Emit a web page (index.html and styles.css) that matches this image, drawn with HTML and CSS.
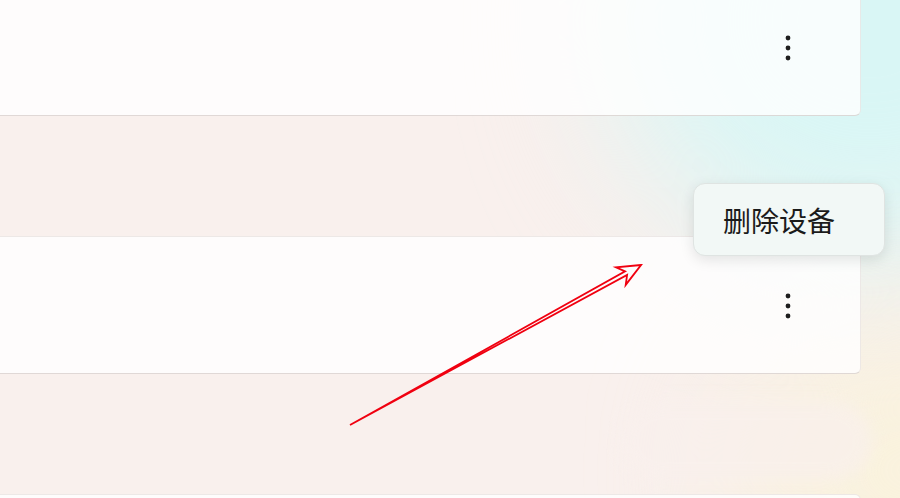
FILE: index.html
```html
<!DOCTYPE html>
<html lang="zh-CN">
<head>
<meta charset="utf-8">
<title>设备</title>
<link rel="stylesheet" href="styles.css">
</head>
<body>
<div class="page">
  <div class="glow glow-cyan"></div>
  <div class="glow glow-yellow"></div>
  <div class="blob"></div>
  <div class="list">
    <div class="card">
      <button class="more" aria-label="更多">
        <svg width="6" height="26" viewBox="0 0 6 26"><circle cx="3" cy="3" r="2.4"/><circle cx="3" cy="13" r="2.4"/><circle cx="3" cy="23" r="2.4"/></svg>
      </button>
    </div>
    <div class="card">
      <button class="more" aria-label="更多">
        <svg width="6" height="26" viewBox="0 0 6 26"><circle cx="3" cy="3" r="2.4"/><circle cx="3" cy="13" r="2.4"/><circle cx="3" cy="23" r="2.4"/></svg>
      </button>
    </div>
    <div class="card"></div>
  </div>
  <div class="menu">
    <div class="menu-item">删除设备</div>
  </div>
  <svg class="arrow" width="900" height="498" viewBox="0 0 900 498">
    <polygon points="641,265 616,267.3 625.1,271.4 350,425 627.1,274.9 625.7,284.9" fill="none" stroke="#f00010" stroke-width="1.8" stroke-linejoin="miter"/>
  </svg>
</div>
</body>
</html>
```

FILE: styles.css
```css
html, body {
  margin: 0;
  padding: 0;
}
body {
  width: 900px;
  height: 498px;
  overflow: hidden;
  background: #f9f0ed;
  font-family: "Noto Sans CJK SC", "Noto Sans", sans-serif;
}
.page {
  position: relative;
  width: 900px;
  height: 498px;
  overflow: hidden;
}
.glow {
  position: absolute;
  border-radius: 50%;
  filter: blur(70px);
  pointer-events: none;
}
.glow-cyan {
  left: 610px;
  top: -220px;
  width: 520px;
  height: 480px;
  background: #d9f6f5;
}
.glow-yellow {
  left: 740px;
  top: 340px;
  width: 340px;
  height: 260px;
  background: #f9f2dc;
}
.blob {
  position: absolute;
  left: 620px;
  top: 402px;
  width: 252px;
  height: 78px;
  border-radius: 40px;
  background: #f9f0ed;
  opacity: 0.7;
  filter: blur(8px);
}
.list {
  position: relative;
  display: flex;
  flex-direction: column;
  gap: 120px;
  margin-top: -22px;
  margin-left: -20px;
  width: 881px;
}
.card {
  height: 138px;
  flex-shrink: 0;
  box-sizing: border-box;
  background: rgba(255, 255, 255, 0.8);
  border: 1px solid rgba(170, 150, 145, 0.2);
  border-bottom-color: rgba(160, 140, 135, 0.32);
  border-radius: 6px;
  display: flex;
  align-items: center;
  justify-content: flex-end;
  padding-right: 69px;
}
.more {
  border: 0;
  background: none;
  padding: 0;
  width: 6px;
  height: 26px;
  display: flex;
  margin-top: 1px;
}
.more svg {
  fill: #1e1e1e;
}
.menu {
  position: absolute;
  left: 693px;
  top: 183px;
  width: 192px;
  height: 73px;
  box-sizing: border-box;
  border-radius: 12px;
  background: #f2f8f6;
  border: 1px solid #dfe4e2;
  box-shadow: 0 4px 14px rgba(0, 0, 0, 0.10);
  display: flex;
  align-items: center;
  padding-left: 29px;
}
.menu-item {
  font-size: 28px;
  line-height: 1;
  color: #1b1b1b;
}
.arrow {
  position: absolute;
  left: 0;
  top: 0;
  pointer-events: none;
}
```
